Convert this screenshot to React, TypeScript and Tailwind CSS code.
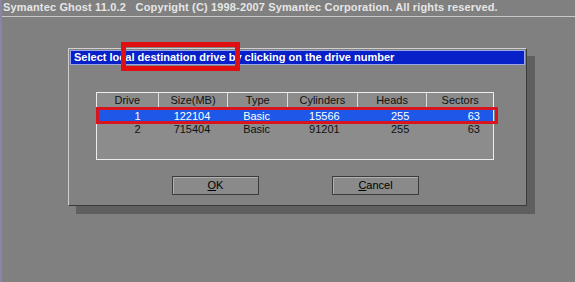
import React from 'react'

const COLS = [
  { name: 'Drive', w: 'w-[62px]' },
  { name: 'Size(MB)', w: 'w-[70px]' },
  { name: 'Type', w: 'w-[60px]' },
  { name: 'Cylinders', w: 'w-[70px]' },
  { name: 'Heads', w: 'w-[70px]' },
  { name: 'Sectors', w: 'w-[66px]' },
]

const DRIVES = [
  ['1', '122104', 'Basic', '15566', '255', '63'],
  ['2', '715404', 'Basic', '91201', '255', '63'],
]

const font = { fontFamily: '"Liberation Sans", Arial, sans-serif' }

const Button = ({ label, hot }: { label: string; hot: string }) => (
  <div className="w-[87px] h-[19px] border border-[#3c3c3c] bg-[#8a8a8a] flex items-center justify-center text-[11px] text-black shadow-[inset_1px_1px_0_#b0b0b0]">
    <span>
      <span className="underline">{hot}</span>
      {label}
    </span>
  </div>
)

export default function App() {
  return (
    <div className="w-[575px] h-[282px] bg-[#808080] overflow-hidden border-l-2 border-[#8a84a8]" style={font}>
      {/* top banner */}
      <div className="h-[17px] border-b border-[#c8c8c8] pl-[1px] text-[11px] leading-[14px] font-bold text-[#e6e6e6] whitespace-pre tracking-[0.15px]">
        Symantec Ghost 11.0.2   Copyright (C) 1998-2007 Symantec Corporation. All rights reserved.
      </div>

      {/* dialog */}
      <div className="relative ml-[66px] mt-[31px] w-[459px] h-[158px] bg-[#828282] border border-t-[#cfcfcf] border-l-[#cfcfcf] border-b-[#3a3a3a] border-r-[#3a3a3a] shadow-[8px_8px_0_#5f5f5f]">
        <div className="mx-[1px] mt-[1px] h-[15px] bg-[#0820c8] border border-[#9aa6e6] pl-[3px] text-[11px] leading-[13px] font-bold text-white whitespace-nowrap">
          Select local destination drive by clicking on the drive number
        </div>
        {/* highlight box over title */}
        <div className="absolute left-[52px] top-[-7px] w-[119px] h-[29px] border-[5px] border-[#e01010]" />

        {/* drive table */}
        <div className="relative ml-[27px] mt-[27px] w-[398px] h-[68px] border border-[#ececec] bg-[#8c8c8c] text-[11px]">
          <div className="flex h-[15px] leading-[15px] text-[#111]">
            {COLS.map((c, i) => (
              <div key={c.name} className={`${c.w} text-center ${i < COLS.length - 1 ? 'border-r border-[#dcdcdc]' : ''}`}>
                {c.name}
              </div>
            ))}
          </div>
          <div className="mt-[2px]">
            {DRIVES.map((row, r) => (
              <div
                key={r}
                className={`flex h-[13px] leading-[13px] ${r === 0 ? 'bg-[#1e58e8] text-white' : 'text-[#111]'}`}
              >
                {row.map((v, i) => (
                  <div key={i} className={`${COLS[i].w} text-right ${i === 5 ? 'pr-[13px]' : 'pr-[18px]'}`}>
                    {v}
                  </div>
                ))}
              </div>
            ))}
          </div>
          {/* highlight box over selected row */}
          <div className="absolute left-[-1px] top-[14px] w-[402px] h-[17px] border-[3px] border-[#d8141e]" />
        </div>

        <div className="flex ml-[103px] mt-[16px] gap-[73px]">
          <Button hot="O" label="K" />
          <Button hot="C" label="ancel" />
        </div>
      </div>
    </div>
  )
}
